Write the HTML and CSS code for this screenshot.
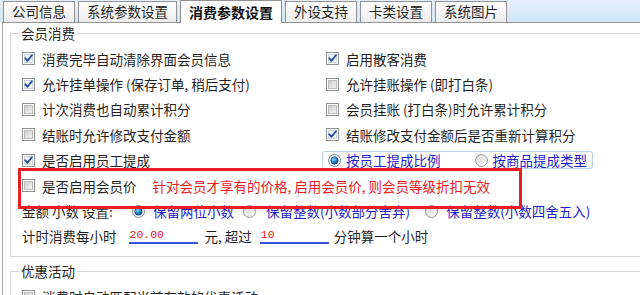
FILE: index.html
```html
<!DOCTYPE html>
<html lang="zh-CN">
<head>
<meta charset="utf-8">
<title>消费参数设置</title>
<link rel="stylesheet" href="styles.css">
</head>
<body>
<svg class="defs" width="0" height="0" aria-hidden="true">
  <defs>
    <linearGradient id="cbg" x1="0" y1="0" x2="1" y2="1">
      <stop offset="0" stop-color="#cbcbcb"/>
      <stop offset="1" stop-color="#f6f6f6"/>
    </linearGradient>
    <linearGradient id="rbg" x1="0" y1="0" x2="1" y2="1">
      <stop offset="0" stop-color="#d0d0d0"/>
      <stop offset="1" stop-color="#fafafa"/>
    </linearGradient>
    <radialGradient id="rdot" cx="0.4" cy="0.35" r="0.7">
      <stop offset="0" stop-color="#8fdcff"/>
      <stop offset="0.45" stop-color="#2a8fd0"/>
      <stop offset="1" stop-color="#0b3f78"/>
    </radialGradient>
    <symbol id="cb-off" viewBox="0 0 13 13">
      <rect x="0.5" y="0.5" width="12" height="12" fill="#fff" stroke="#8e8f8f"/>
      <rect x="2.5" y="2.5" width="8" height="8" fill="url(#cbg)" stroke="#bdbdbd"/>
    </symbol>
    <symbol id="cb-on" viewBox="0 0 13 13">
      <rect x="0.5" y="0.5" width="12" height="12" fill="#fff" stroke="#8e8f8f"/>
      <rect x="2.5" y="2.5" width="8" height="8" fill="#f3f6fb" stroke="#c9d3e0"/>
      <path d="M3.3 6.3 L5.5 8.8 L9.9 3.3" fill="none" stroke="#21489c" stroke-width="1.8" stroke-linecap="round" stroke-linejoin="round"/>
    </symbol>
    <symbol id="rd-off" viewBox="0 0 13 13">
      <circle cx="6.5" cy="6.5" r="6" fill="url(#rbg)" stroke="#9a9a9a"/>
      <circle cx="6.5" cy="6.5" r="4" fill="none" stroke="#fff" stroke-opacity="0.6"/>
    </symbol>
    <symbol id="rd-on" viewBox="0 0 13 13">
      <circle cx="6.5" cy="6.5" r="6" fill="#f2f6fa" stroke="#7f8c99"/>
      <circle cx="6.5" cy="6.5" r="3.7" fill="url(#rdot)" stroke="#1c4f86" stroke-width="0.6"/>
    </symbol>
  </defs>
</svg>

<div class="win">
  <div class="tabs">
    <div class="tab">公司信息</div>
    <div class="tab">系统参数设置</div>
    <div class="tab active">消费参数设置</div>
    <div class="tab">外设支持</div>
    <div class="tab">卡类设置</div>
    <div class="tab">系统图片</div>
  </div>

  <div class="panel">
    <fieldset class="group g1">
      <legend>会员消费</legend>
      <div class="grid">
        <div class="opt"><svg class="cb"><use href="#cb-on"/></svg><span>消费完毕自动清除界面会员信息</span></div>
        <div class="opt"><svg class="cb"><use href="#cb-on"/></svg><span>启用散客消费</span></div>
        <div class="opt"><svg class="cb"><use href="#cb-on"/></svg><span>允许挂单操作 (保存订单, 稍后支付)</span></div>
        <div class="opt"><svg class="cb"><use href="#cb-off"/></svg><span>允许挂账操作 (即打白条)</span></div>
        <div class="opt"><svg class="cb"><use href="#cb-off"/></svg><span>计次消费也自动累计积分</span></div>
        <div class="opt"><svg class="cb"><use href="#cb-off"/></svg><span>会员挂账 (打白条)时允许累计积分</span></div>
        <div class="opt"><svg class="cb"><use href="#cb-off"/></svg><span>结账时允许修改支付金额</span></div>
        <div class="opt"><svg class="cb"><use href="#cb-on"/></svg><span>结账修改支付金额后是否重新计算积分</span></div>
        <div class="opt"><svg class="cb"><use href="#cb-on"/></svg><span>是否启用员工提成</span></div>
        <div class="opt">
          <div class="rgroup">
            <svg class="rd"><use href="#rd-on"/></svg><span class="blue">按员工提成比例</span>
            <svg class="rd rd2"><use href="#rd-off"/></svg><span class="blue">按商品提成类型</span>
          </div>
        </div>
      </div>

      <div class="row mark-row">
        <svg class="cb"><use href="#cb-off"/></svg><span>是否启用会员价</span>
        <span class="red note">针对会员才享有的价格, 启用会员价, 则会员等级折扣无效</span>
        <div class="redbox"></div>
      </div>

      <div class="row">
        <span class="lbl">金额 小数 设置:</span>
        <svg class="rd"><use href="#rd-on"/></svg><span class="blue">保留两位小数</span>
        <svg class="rd rdb"><use href="#rd-off"/></svg><span class="blue rtxt">保留整数(小数部分舍弃)</span>
        <svg class="rd rdc"><use href="#rd-off"/></svg><span class="blue">保留整数(小数四舍五入)</span>
      </div>

      <div class="row">
        <span>计时消费每小时</span>
        <span class="inp i1">20.00</span>
        <span class="mid">元, 超过</span>
        <span class="inp i2">10</span>
        <span class="tail">分钟算一个小时</span>
      </div>
    </fieldset>

    <fieldset class="group g2">
      <legend>优惠活动</legend>
      <div class="row">
        <svg class="cb"><use href="#cb-off"/></svg><span>消费时自动匹配当前有效的优惠活动</span>
      </div>
    </fieldset>
  </div>
</div>
</body>
</html>
```

FILE: styles.css
```css
html, body {
  margin: 0;
  padding: 0;
}

body {
  width: 640px;
  height: 295px;
  overflow: hidden;
  background: #ffffff;
  font-family: "Noto Sans CJK SC", "Noto Sans", sans-serif;
  font-size: 13.5px;
  color: #1f1f1f;
}

.defs {
  display: block;
  width: 0;
  height: 0;
  overflow: hidden;
}

.win {
  width: 760px;
}

/* ---------- tabs ---------- */
.tabs {
  display: flex;
  align-items: flex-end;
  gap: 3px;
  height: 22px;
  padding-left: 3px;
  background: linear-gradient(#e4eff9, #d2e5f4);
}

.tab {
  box-sizing: border-box;
  height: 21px;
  padding: 0 8px;
  border: 1px solid #929292;
  border-bottom: none;
  background: linear-gradient(#ffffff, #ececec);
  line-height: 19px;
  white-space: nowrap;
}

.tab.active {
  position: relative;
  z-index: 1;
  height: 23px;
  margin-bottom: -1px;
  background: #ffffff;
  font-weight: bold;
  font-size: 14px;
  line-height: 22px;
  color: #111;
}

/* ---------- panel ---------- */
.panel {
  margin-left: 2px;
  border-top: 1px solid #929292;
  border-left: 1px solid #a4a4a4;
  padding-top: 1px;
  height: 300px;
}

.group {
  margin: 0 0 0 7px;
  padding: 4px 0 7px 11px;
  border: 1px solid #d6d6d6;
  min-width: 0;
  width: 700px;
  box-sizing: border-box;
}

.group legend {
  margin-left: -3px;
  padding: 0 2px;
  line-height: 18px;
  font-size: 13.5px;
}

.g2 {
  margin-top: 5px;
}

/* ---------- rows ---------- */
.grid {
  display: grid;
  grid-template-columns: 304px 1fr;
  grid-auto-rows: 25.4px;
}

.opt,
.row {
  display: flex;
  align-items: center;
  height: 25.4px;
  white-space: pre;
}

.cb {
  flex: none;
  width: 13px;
  height: 13px;
  margin-right: 7px;
}

.rd {
  flex: none;
  width: 13px;
  height: 13px;
  margin-right: 8px;
}

.blue {
  color: #1d1dcc;
}

.red {
  color: #ea1a1f;
}

/* staff commission radio group */
.rgroup {
  display: flex;
  align-items: center;
  box-sizing: border-box;
  width: 271px;
  height: 18px;
  margin-left: -4px;
  padding: 0 5px;
  border: 1px solid #bccfe2;
  border-radius: 3px;
}

.rgroup .rd {
  margin-right: 5px;
}

.rgroup .rd2 {
  margin-left: 34px;
}

/* member price row with annotation frame */
.mark-row {
  position: relative;
}

.note {
  margin-left: 16px;
}

.redbox {
  position: absolute;
  left: -4px;
  top: -5px;
  width: 504px;
  height: 41px;
  box-sizing: border-box;
  border: 3px solid #ec1c24;
}

/* decimal row */
.lbl {
  width: 110px;
}

.rdb {
  margin-left: 9px;
  margin-right: 10px;
}

.rdc {
  margin-left: 15px;
}

/* hourly row */
.inp {
  box-sizing: border-box;
  height: 16px;
  width: 69px;
  padding-left: 1px;
  border-bottom: 2px solid #3552e0;
  color: #e0161c;
  font-family: "Liberation Mono", "DejaVu Sans Mono", monospace;
  font-size: 11.5px;
  line-height: 13px;
}

.i1 {
  margin-left: 12px;
}

.mid {
  margin-left: 7px;
}

.i2 {
  margin-left: 8px;
}

.tail {
  margin-left: 5px;
}
```
